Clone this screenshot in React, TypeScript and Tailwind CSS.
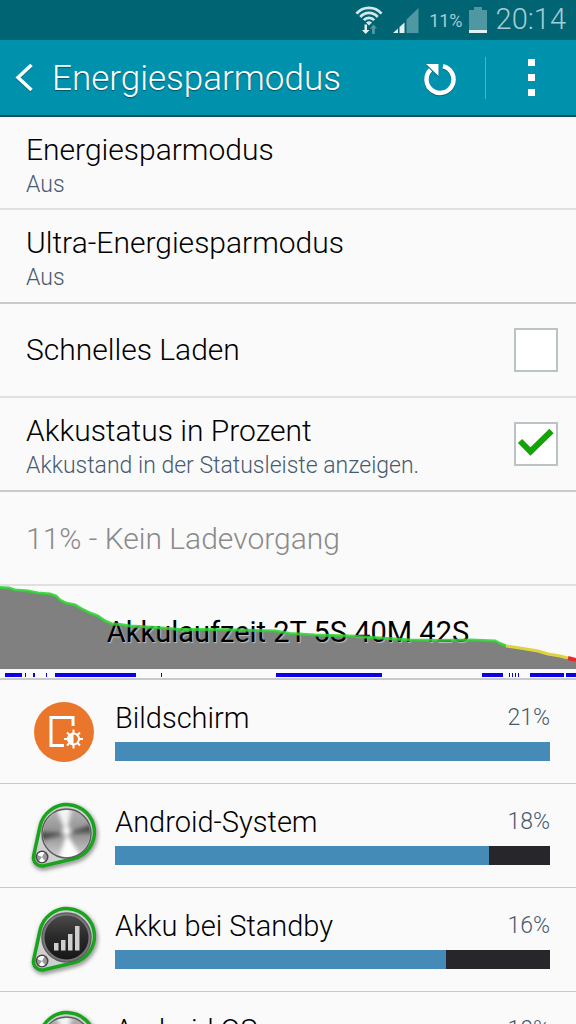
import { useState } from "react"
import type { ReactNode } from "react"

interface Consumer {
  name: string
  percent: number
  fill: number
  icon: ReactNode
}

function StatusBar() {
  return (
    <div className="flex h-10 shrink-0 items-center justify-end bg-[#006473] pr-[10px] text-[#a5cdd3]">
      <svg className="mr-2 h-8 w-8" viewBox="0 0 32 32" fill="none" aria-label="WLAN">
        <path d="M3.500 9.700a16.200 16.200 0 0 1 25 0M7.300 13a11.300 11.300 0 0 1 17.400 0M10.800 16.200a6.800 6.800 0 0 1 10.400 0" stroke="#d3e8eb" strokeWidth="2.800" />
        <path d="M13 18.600a4 4 0 0 1 6 0l-3 2.900z" fill="#d3e8eb" />
        <path d="M11.500 20.500h2.500V26h2.500l-3.800 4-3.700-4h2.500z" fill="#e3f1f3" />
        <path d="M19 30v-5.500h-2l3.500-4 3.500 4h-2.200V30z" fill="#4f98a2" />
      </svg>
      <svg className="mr-[10px] h-8 w-[26px]" viewBox="0 0 26 32" aria-label="Signalstärke">
        <path d="M13.500 15.500 25.500 4v25h-12z" fill="#4f98a2" />
        <path d="M0 29l5-4.500V29zM6.500 23l5-4.500V29h-5z" fill="#e3f1f3" />
      </svg>
      <span className="mr-[6px] text-[18px] font-normal">11%</span>
      <svg className="mr-[9px] h-8 w-[18px]" viewBox="0 0 18 32" aria-label="Akku">
        <path d="M5 3h8v3h5v23H0V6h5z" fill="#4f98a2" />
        <path d="M0 26h18v3H0z" fill="#e3f1f3" />
      </svg>
      <span className="text-[29px] font-light">20:14</span>
    </div>
  )
}

function Header() {
  return (
    <header className="flex h-[77px] shrink-0 items-center border-b-2 border-[#0a4f60] bg-[#0091ad] text-white">
      <button type="button" aria-label="Zurück" className="flex h-full w-[52px] items-center pl-[15px]">
        <svg className="h-7 w-[18px]" viewBox="0 0 18 28" fill="none">
          <path d="M16.500 1.500 3 14l13.500 12.500" stroke="#064f60" strokeWidth="3" transform="translate(0 1)" opacity=".5" />
          <path d="M16.500 1 3 13.500 16.500 26" stroke="currentColor" strokeWidth="3.500" />
        </svg>
      </button>
      <h1 className="flex-1 pt-1 text-[35px] font-light [text-shadow:0_1px_1px_rgba(0,40,55,0.6)]">Energiesparmodus</h1>
      <button type="button" aria-label="Aktualisieren" className="flex h-full w-[90px] items-center justify-center">
        <svg className="h-9 w-9 drop-shadow-[0_1px_0_rgba(0,50,65,0.5)]" viewBox="0 0 36 36" fill="none">
          <path d="M21 6.300A13.500 13.500 0 1 1 8.500 9.900" stroke="currentColor" strokeWidth="4.500" />
          <path d="M4 4h12.500v12z" fill="currentColor" />
        </svg>
      </button>
      <div className="h-[42px] w-px bg-[#4db1c4]" />
      <button type="button" aria-label="Weitere Optionen" className="flex h-full w-[90px] flex-col items-center justify-center gap-2">
        <span className="size-[7px] bg-white" />
        <span className="size-[7px] bg-white" />
        <span className="size-[7px] bg-white" />
      </button>
    </header>
  )
}

function SettingText({ title, summary }: { title: string; summary?: string }) {
  return (
    <span className="flex flex-1 flex-col items-start">
      <span className={summary ? "pt-2 text-[30px] leading-9" : "text-[30px] leading-9"}>{title}</span>
      {summary && <span className="text-[23px] leading-[34px] text-[#475b70]">{summary}</span>}
    </span>
  )
}

function CheckRow({ id, title, summary, initial }: { id: string; title: string; summary?: string; initial: boolean }) {
  const [checked, setChecked] = useState(initial)
  return (
    <label htmlFor={id} className="flex h-full items-center pl-[26px] pr-[18px]">
      <SettingText title={title} summary={summary} />
      <span className="grid size-11">
        <input
          id={id}
          type="checkbox"
          checked={checked}
          onChange={(e) => setChecked(e.target.checked)}
          className="size-11 appearance-none border-2 border-[#bcc3c6] bg-white [grid-area:1/1]"
        />
        {checked && (
          <svg className="pointer-events-none size-11 [grid-area:1/1]" viewBox="0 0 44 44" fill="none">
            <path d="M6 19 16.500 29.500 37.500 9" stroke="#12a305" strokeWidth="6" />
          </svg>
        )}
      </span>
    </label>
  )
}

const levelLine =
  "M0 1.500 9 2 15 4 28 5 38 7 50 8 56 10 60 14 66 17 75 19 82 23 90 27 98 30 105 35 112 38 120 38.500 130 40 148 41 162 42 180 43.500 200 43.500 240 44 275 45 290 47.500 315 49 350 50 380 52 410 54 440 54.500 470 54 495 55 500 57.500 506 60"

// [start, width] of the phases with the screen on
const screenOn = [
  [5, 17], [25, 1], [33, 2], [46, 1], [55, 81], [161, 1], [276, 106], [482, 21],
  [509, 1], [512, 1], [515, 1], [518, 1], [530, 34], [566, 10],
]

function BatteryChart() {
  return (
    <div className="grid h-full">
      <svg className="h-full w-full [grid-area:1/1]" viewBox="0 0 576 92" preserveAspectRatio="none">
        <path d={`${levelLine} 520 62 538 65 548 68 560 70 568 72 576 74V83H0Z`} fill="#808080" />
        {screenOn.map(([x, w]) => (
          <rect key={x} x={x} y="87" width={w} height="4" fill="#0b00e6" />
        ))}
      </svg>
      <p className="self-center text-center text-[29px] font-normal leading-9 [grid-area:1/1] [text-shadow:1px_1px_1px_rgba(255,255,255,0.5)]">
        Akkulaufzeit 2T 5S 40M 42S
      </p>
      <svg className="h-full w-full [grid-area:1/1]" viewBox="0 0 576 92" preserveAspectRatio="none" fill="none" strokeWidth="3">
        <path d={levelLine} stroke="#2fd033" strokeOpacity=".85" />
        <path d="M506 60 520 62 538 65 548 68 560 70 568 72" stroke="#dfd340" />
        <path d="M568 72 576 74" stroke="#e8282c" strokeWidth="4" />
      </svg>
    </div>
  )
}

function DisplayIcon() {
  return (
    <svg className="size-[72px]" viewBox="0 0 72 72" fill="none">
      <circle cx="36" cy="36" r="30" fill="#e9762a" />
      <path d="M45 30v-8.500H23v28h13" stroke="#fff" strokeWidth="3" />
      <circle cx="45.500" cy="43" r="5.500" stroke="#fff" strokeWidth="2" />
      <path d="M45.500 37a6 6 0 0 0 0 12z" fill="#fff" />
      <path
        d="M45.500 33.500v4M45.500 48.500v4M36 43h4M51 43h4M39 36.500l2.500 2.500M49.500 47l2.500 2.500M52 36.500 49.500 39M41.500 47 39 49.500"
        stroke="#fff"
        strokeWidth="2"
      />
    </svg>
  )
}

function SystemIcon({ id, signal }: { id: string; signal?: boolean }) {
  return (
    <svg className="size-[72px] overflow-visible" viewBox="0 0 72 72" fill="none">
      <defs>
        <filter id={`${id}-soft`} x="-20%" y="-20%" width="140%" height="140%">
          <feGaussianBlur stdDeviation="2" />
        </filter>
        <clipPath id={`${id}-disc`}>
          <circle cx="38.500" cy="33.500" r="23.500" />
        </clipPath>
        <linearGradient id={`${id}-base`} x1="0" y1="0" x2="1" y2="1">
          <stop offset="0" stopColor="#fff" />
          <stop offset=".5" stopColor="#b5b5b5" />
          <stop offset="1" stopColor="#eee" />
        </linearGradient>
        <linearGradient id={`${id}-steel`} x1="0" y1="0" x2="0" y2="1">
          <stop offset="0" stopColor="#b4b4b4" />
          <stop offset=".5" stopColor="#8f8f8f" />
          <stop offset="1" stopColor="#d2d2d2" />
        </linearGradient>
        <linearGradient id={`${id}-dark`} x1="0" y1="0" x2="0" y2="1">
          <stop offset="0" stopColor="#4c4c4c" />
          <stop offset=".5" stopColor="#292929" />
          <stop offset="1" stopColor="#161616" />
        </linearGradient>
      </defs>
      <path
        d="M12.100 26.100A27.500 27.500 0 1 1 45.400 58.800L16 65.800A8.500 8.500 0 0 1 5.700 55.700Z"
        stroke="#444"
        strokeWidth="4"
        transform="translate(1 2)"
        opacity=".7"
        filter={`url(#${id}-soft)`}
      />
      <path
        d="M12.100 26.100A27.500 27.500 0 1 1 45.400 58.800L16 65.800A8.500 8.500 0 0 1 5.700 55.700Z"
        fill="#d0d0d0"
        stroke="#18a51c"
        strokeWidth="3.500"
      />
      <circle cx="38.500" cy="33.500" r="24.500" fill={`url(#${id}-base)`} />
      {signal ? (
        <>
          <circle cx="38.500" cy="33.500" r="23" fill={`url(#${id}-dark)`} stroke="#777" strokeWidth="2" />
          <path d="M26 39h4.500v7.500H26zM33 36h4.500v10.500H33zM40 30h4.500v16.500H40zM47 22h4.500v24.500H47z" fill="#cfcfcf" />
        </>
      ) : (
        <g clipPath={`url(#${id}-disc)`}>
          <circle cx="38.500" cy="33.500" r="24" fill={`url(#${id}-steel)`} />
          <g filter={`url(#${id}-soft)`}>
            <path d="M38.500 33.500 27 6h17z" fill="#f4f4f4" />
            <path d="M38.500 33.500 10 32v9z" fill="#4a4a4a" />
            <path d="M38.500 33.500 68 23v9z" fill="#4a4a4a" />
            <path d="M38.500 33.500 56 62H30z" fill="#fff" />
            <circle cx="38.500" cy="31" r="4" fill="#fff" />
          </g>
        </g>
      )}
      <circle cx="38.500" cy="33.500" r="24.500" stroke="#5e5a62" strokeWidth="1.500" />
      <circle cx="14" cy="57" r="6.500" fill="#444" />
      <circle cx="14" cy="57" r="5" fill="#999" />
      <path d="M14 57 9.500 55a5 5 0 0 1 7-2.500zM14 57l3 4a5 5 0 0 1-6 0z" fill="#fff" />
    </svg>
  )
}

const consumers: Consumer[] = [
  { name: "Bildschirm", percent: 21, fill: 100, icon: <DisplayIcon /> },
  { name: "Android-System", percent: 18, fill: 86, icon: <SystemIcon id="system" /> },
  { name: "Akku bei Standby", percent: 16, fill: 76, icon: <SystemIcon id="standby" signal /> },
  { name: "Android OS", percent: 10, fill: 48, icon: <SystemIcon id="os" /> },
]

function ConsumerRow({ name, percent, fill, icon }: Consumer) {
  return (
    <li className="flex h-[104px] items-center gap-[15px] border-b border-[#c9c9c9] pl-7 pr-[26px]">
      {icon}
      <div className="flex-1 pb-[2px]">
        <div className="flex items-center justify-between">
          <span className="text-[29px] leading-9">{name}</span>
          <span className="text-[23px] leading-9 text-[#475b70]">{percent}%</span>
        </div>
        <div className="mt-[6px] h-[19px] bg-[#26262b]">
          <div className="h-full bg-[#458bb7]" style={{ width: `${fill}%` }} />
        </div>
      </div>
    </li>
  )
}

export default function App() {
  return (
    <div className="flex h-screen flex-col overflow-hidden bg-[#fafafa] font-['Roboto','Liberation_Sans',sans-serif] font-light text-black">
      <StatusBar />
      <Header />
      <main>
        <ul>
          <li className="h-[93px] border-b-2 border-[#e0e0e0]">
            <button type="button" className="flex h-full w-full items-center pl-[26px] text-left">
              <SettingText title="Energiesparmodus" summary="Aus" />
            </button>
          </li>
          <li className="h-[94px] border-b-2 border-[#cacaca]">
            <button type="button" className="flex h-full w-full items-center pl-[26px] text-left">
              <SettingText title="Ultra-Energiesparmodus" summary="Aus" />
            </button>
          </li>
          <li className="h-[94px] border-b-2 border-[#e0e0e0]">
            <CheckRow id="fast-charging" title="Schnelles Laden" initial={false} />
          </li>
          <li className="h-[94px] border-b-2 border-[#cacaca]">
            <CheckRow id="percent" title="Akkustatus in Prozent" summary="Akkustand in der Statusleiste anzeigen." initial />
          </li>
          <li className="flex h-[94px] items-center border-b-2 border-[#e0e0e0] pl-[26px] text-[30px] text-[#8a8a8a]">
            11% - Kein Ladevorgang
          </li>
          <li className="h-[94px] border-b-2 border-[#cacaca]">
            <BatteryChart />
          </li>
        </ul>
        <ul>
          {consumers.map((consumer) => (
            <ConsumerRow key={consumer.name} {...consumer} />
          ))}
        </ul>
      </main>
    </div>
  )
}
